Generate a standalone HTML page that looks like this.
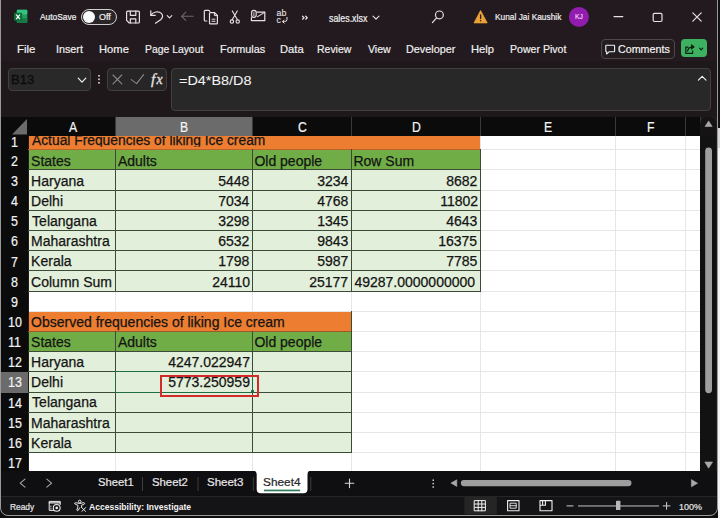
<!DOCTYPE html><html><head><meta charset="utf-8"><style>
*{margin:0;padding:0;box-sizing:border-box}
html,body{width:720px;height:518px;overflow:hidden;background:#0d0d0d}
body{position:relative;font-family:"Liberation Sans",sans-serif}
.a{position:absolute}
.t{position:absolute;white-space:nowrap;line-height:1;transform-origin:0 0}
svg{position:absolute;overflow:visible}
</style></head><body>
<div class="a" style="left:0;top:0;width:718px;height:516px;background:#221a1f;border-radius:0 0 8px 8px"></div>
<svg style="left:0;top:0" width="40" height="40"><rect x="16.8" y="9.8" width="10.5" height="13.3" rx="1" fill="#1e9e5c"/><rect x="16.8" y="9.8" width="10.5" height="4.6" rx="1" fill="#33c27f"/><rect x="16.8" y="18.4" width="10.5" height="4.7" rx="1" fill="#167a45"/><rect x="14" y="12.8" width="8.1" height="8" rx="0.8" fill="#0f6f3c"/><path d="M16.2 14.6 L19.9 19.1 M19.9 14.6 L16.2 19.1" stroke="#f4fff8" stroke-width="1.3"/></svg>
<div class="t" style="left:40.00px;top:13.00px;font-size:9px;color:#f0f0f0;font-weight:400;font-family:'Liberation Sans';transform:scaleX(0.9308);-webkit-text-stroke:0.2px #f0f0f0;">AutoSave</div>
<div class="a" style="left:81px;top:8.5px;width:36px;height:16.5px;border:1.3px solid #cfcfcf;border-radius:9px;background:#2a2627"></div>
<div class="a" style="left:83px;top:10.5px;width:12px;height:12px;border-radius:50%;background:#fafafa"></div>
<div class="t" style="left:99.00px;top:13.40px;font-size:8.5px;color:#f0f0f0;font-weight:400;font-family:'Liberation Sans';transform:scaleX(1.0545);-webkit-text-stroke:0.2px #f0f0f0;">Off</div>
<div class="t" style="left:329.30px;top:13.80px;font-size:10px;color:#f0f0f0;font-weight:400;font-family:'Liberation Sans';transform:scaleX(0.8837);-webkit-text-stroke:0.2px #f0f0f0;">sales.xlsx</div>
<div class="t" style="left:495.42px;top:11.80px;font-size:9.5px;color:#f0f0f0;font-weight:400;font-family:'Liberation Sans';transform:scaleX(0.8784);-webkit-text-stroke:0.2px #f0f0f0;">Kunal Jai Kaushik</div>
<svg style="left:0;top:0" width="720" height="40"><path d="M127.6 11.2 H138.4 Q139.4 11.2 139.4 12.2 V22 Q139.4 23 138.4 23 H129.2 L126.6 20.4 V12.2 Q126.6 11.2 127.6 11.2 Z" stroke="#e6e2e3" stroke-width="1.2" fill="none" stroke-linecap="round" stroke-linejoin="round" /><path d="M130.3 11.2 V15.3 H135.8 V11.2" stroke="#e6e2e3" stroke-width="1.2" fill="none" stroke-linecap="round" stroke-linejoin="round" /><path d="M130.3 23 V18.8 H135.8 V23" stroke="#e6e2e3" stroke-width="1.2" fill="none" stroke-linecap="round" stroke-linejoin="round" /><path d="M150.8 10.8 V15.3 H155.3" stroke="#e6e2e3" stroke-width="1.2" fill="none" stroke-linecap="round" stroke-linejoin="round" /><path d="M150.8 15.3 C153 11.6 158.6 10.8 161.4 13.4 C163.2 15.2 162.8 17.6 161 19.4 L155.4 23.2" stroke="#e6e2e3" stroke-width="1.2" fill="none" stroke-linecap="round" stroke-linejoin="round" /><path d="M167.2 15.6 L169.5 17.8 L171.8 15.6" stroke="#e6e2e3" stroke-width="1.1" fill="none" stroke-linecap="round" stroke-linejoin="round" /><path d="M181.6 16.3 H193.2 M181.6 16.3 L185.8 12.2 M181.6 16.3 L185.8 20.4" stroke="#6e6769" stroke-width="1.1" fill="none" stroke-linecap="round" stroke-linejoin="round" /><path d="M206.8 21 H205.2 Q204.3 21 204.3 20.1 V11.3 Q204.3 10.4 205.2 10.4 H208.6 Q209.6 10.4 209.8 11.6" stroke="#e6e2e3" stroke-width="1.2" fill="none" stroke-linecap="round" stroke-linejoin="round" /><path d="M210.4 12.7 H214.6 L217.4 15.5 V22.9 Q217.4 23.8 216.5 23.8 H210.4 Q209.5 23.8 209.5 22.9 V13.6 Q209.5 12.7 210.4 12.7 Z" stroke="#e6e2e3" stroke-width="1.2" fill="none" stroke-linecap="round" stroke-linejoin="round" /><path d="M214.4 12.8 V15.6 H217.3" stroke="#e6e2e3" stroke-width="1.0" fill="none" stroke-linecap="round" stroke-linejoin="round" /><path d="M212 19.2 H215 M212 21.3 H215" stroke="#e6e2e3" stroke-width="1.0" fill="none" stroke-linecap="round" stroke-linejoin="round" /><path d="M232.3 10.9 L237.3 19.6 M237.3 10.9 L232.3 19.6" stroke="#e6e2e3" stroke-width="1.1" fill="none" stroke-linecap="round" stroke-linejoin="round" /><circle cx="231.9" cy="21.6" r="1.7" stroke="#e6e2e3" stroke-width="1.1" fill="none"/><circle cx="237.7" cy="21.6" r="1.7" stroke="#e6e2e3" stroke-width="1.1" fill="none"/><path d="M256.8 12.2 H264.8 V20.6 H251.4 V17.6" stroke="#e6e2e3" stroke-width="1.2" fill="none" stroke-linecap="round" stroke-linejoin="round" /><path d="M264.6 12.4 L257.6 16.6" stroke="#e6e2e3" stroke-width="1.1" fill="none" stroke-linecap="round" stroke-linejoin="round" /><rect x="251.6" y="10.4" width="4.6" height="7" rx="2.3" stroke="#e6e2e3" stroke-width="1.1" fill="#221a1f"/><path d="M253.9 12.6 V15.6" stroke="#e6e2e3" stroke-width="0.9" fill="none" stroke-linecap="round" stroke-linejoin="round" /><text x="276.6" y="16.1" font-family="Liberation Sans" font-size="8.8" fill="#e6e2e3" stroke="#e6e2e3" stroke-width="0.1">ab</text><text x="276.6" y="22.6" font-family="Liberation Sans" font-size="8.8" fill="#e6e2e3" stroke="#e6e2e3" stroke-width="0.1">c</text><path d="M287 17.4 V19.4 Q287 21.6 284.6 21.6 H282.6 M284.2 20 L282.6 21.6 L284.2 23.2" stroke="#e6e2e3" stroke-width="1.0" fill="none" stroke-linecap="round" stroke-linejoin="round" /><path d="M302.5 16.2 L304.1 17.7 L302.5 19.2 M305.7 16.2 L307.3 17.7 L305.7 19.2" stroke="#e6e2e3" stroke-width="1.2" fill="none" stroke-linecap="round" stroke-linejoin="round" /><path d="M373 16.2 L376 19.2 L379 16.2" stroke="#e6e2e3" stroke-width="1.1" fill="none" stroke-linecap="round" stroke-linejoin="round" /><circle cx="439.4" cy="14.9" r="3.9" stroke="#e6e2e3" stroke-width="1.2" fill="none"/><path d="M436.6 17.8 L432.4 22.6" stroke="#e6e2e3" stroke-width="1.2" fill="none" stroke-linecap="round" stroke-linejoin="round" /><path d="M480.6 10.6 L487.2 22.9 H474 Z" fill="#eaa235" stroke="#eaa235" stroke-width="0.8" stroke-linejoin="round"/><path d="M480.6 14.8 V18.6" stroke="#2a1a10" stroke-width="1.3" fill="none" stroke-linecap="round" stroke-linejoin="round" /><circle cx="480.6" cy="20.7" r="0.7" fill="#2a1a10"/><circle cx="578.9" cy="16.9" r="10" fill="#921cad"/><path d="M614 16.6 H622.8" stroke="#e6e2e3" stroke-width="1.2" fill="none" stroke-linecap="round" stroke-linejoin="round" /><path d="M654.4 13.3 H660.8 Q662 13.3 662 14.5 V20.3 Q662 21.5 660.8 21.5 H654.4 Q653.2 21.5 653.2 20.3 V14.5 Q653.2 13.3 654.4 13.3 Z" stroke="#e6e2e3" stroke-width="1.2" fill="none" stroke-linecap="round" stroke-linejoin="round" /><path d="M692.8 12.8 L701.2 21.2 M701.2 12.8 L692.8 21.2" stroke="#e6e2e3" stroke-width="1.2" fill="none" stroke-linecap="round" stroke-linejoin="round" /></svg>
<div class="t" style="left:574.92px;top:13.30px;font-size:7.7px;color:#f4d0f4;font-weight:400;font-family:'Liberation Sans';transform:scaleX(0.8750);-webkit-text-stroke:0.2px #f4d0f4;">KJ</div>
<div class="t" style="left:17.32px;top:43.00px;font-size:11.6px;color:#f0f0f0;font-weight:400;font-family:'Liberation Sans';transform:scaleX(0.9824);-webkit-text-stroke:0.2px #f0f0f0;">File</div>
<div class="t" style="left:55.77px;top:43.00px;font-size:11.6px;color:#f0f0f0;font-weight:400;font-family:'Liberation Sans';transform:scaleX(0.9286);-webkit-text-stroke:0.2px #f0f0f0;">Insert</div>
<div class="t" style="left:99.03px;top:43.00px;font-size:11.6px;color:#f0f0f0;font-weight:400;font-family:'Liberation Sans';transform:scaleX(0.9667);-webkit-text-stroke:0.2px #f0f0f0;">Home</div>
<div class="t" style="left:145.10px;top:43.00px;font-size:11.6px;color:#f0f0f0;font-weight:400;font-family:'Liberation Sans';transform:scaleX(0.8953);-webkit-text-stroke:0.2px #f0f0f0;">Page Layout</div>
<div class="t" style="left:219.86px;top:43.00px;font-size:11.6px;color:#f0f0f0;font-weight:400;font-family:'Liberation Sans';transform:scaleX(0.9362);-webkit-text-stroke:0.2px #f0f0f0;">Formulas</div>
<div class="t" style="left:279.63px;top:43.00px;font-size:11.6px;color:#f0f0f0;font-weight:400;font-family:'Liberation Sans';transform:scaleX(0.9652);-webkit-text-stroke:0.2px #f0f0f0;">Data</div>
<div class="t" style="left:317.10px;top:43.00px;font-size:11.6px;color:#f0f0f0;font-weight:400;font-family:'Liberation Sans';transform:scaleX(0.9027);-webkit-text-stroke:0.2px #f0f0f0;">Review</div>
<div class="t" style="left:367.50px;top:43.00px;font-size:11.6px;color:#f0f0f0;font-weight:400;font-family:'Liberation Sans';transform:scaleX(0.9120);-webkit-text-stroke:0.2px #f0f0f0;">View</div>
<div class="t" style="left:405.77px;top:43.00px;font-size:11.6px;color:#f0f0f0;font-weight:400;font-family:'Liberation Sans';transform:scaleX(0.9346);-webkit-text-stroke:0.2px #f0f0f0;">Developer</div>
<div class="t" style="left:471.03px;top:43.00px;font-size:11.6px;color:#f0f0f0;font-weight:400;font-family:'Liberation Sans';transform:scaleX(0.9652);-webkit-text-stroke:0.2px #f0f0f0;">Help</div>
<div class="t" style="left:509.89px;top:43.00px;font-size:11.6px;color:#f0f0f0;font-weight:400;font-family:'Liberation Sans';transform:scaleX(0.9115);-webkit-text-stroke:0.2px #f0f0f0;">Power Pivot</div>
<div class="a" style="left:0;top:61px;width:718px;height:56px;background:#1f181b"></div>
<div class="a" style="left:7.5px;top:67.5px;width:83px;height:23px;background:#2a2929;border:1px solid #433f40;border-radius:4px"></div>
<div class="t" style="left:11.19px;top:73.00px;font-size:13px;color:#0c0c0c;font-weight:400;font-family:'Liberation Sans';transform:scaleX(1.0091);-webkit-text-stroke:0.35px #0c0c0c;">B13</div>
<div class="a" style="left:107px;top:67.5px;width:60px;height:23px;background:#272526;border:1px solid #433f40;border-radius:4px"></div>
<div class="a" style="left:170.5px;top:67.5px;width:540px;height:43.5px;background:#292828;border:1px solid #433f40;border-radius:4px"></div>
<div class="t" style="left:179.42px;top:73.50px;font-size:13.3px;color:#f4f4f4;font-weight:400;font-family:'Liberation Sans';transform:scaleX(1.0846);-webkit-text-stroke:0.05px #f4f4f4;">=D4*B8/D8</div>
<div class="a" style="left:28.5px;top:135.5px;width:671.5px;height:335.0px;background:#fff"></div>
<div class="a" style="left:115px;top:135.5px;width:1px;height:335.0px;background:#e6e6e6"></div>
<div class="a" style="left:252px;top:135.5px;width:1px;height:335.0px;background:#e6e6e6"></div>
<div class="a" style="left:351px;top:135.5px;width:1px;height:335.0px;background:#e6e6e6"></div>
<div class="a" style="left:480px;top:135.5px;width:1px;height:335.0px;background:#e6e6e6"></div>
<div class="a" style="left:615px;top:135.5px;width:1px;height:335.0px;background:#e6e6e6"></div>
<div class="a" style="left:685px;top:135.5px;width:1px;height:335.0px;background:#e6e6e6"></div>
<div class="a" style="left:28.5px;top:149px;width:671.5px;height:1px;background:#e6e6e6"></div>
<div class="a" style="left:28.5px;top:169px;width:671.5px;height:1px;background:#e6e6e6"></div>
<div class="a" style="left:28.5px;top:190px;width:671.5px;height:1px;background:#e6e6e6"></div>
<div class="a" style="left:28.5px;top:210px;width:671.5px;height:1px;background:#e6e6e6"></div>
<div class="a" style="left:28.5px;top:230px;width:671.5px;height:1px;background:#e6e6e6"></div>
<div class="a" style="left:28.5px;top:250px;width:671.5px;height:1px;background:#e6e6e6"></div>
<div class="a" style="left:28.5px;top:270px;width:671.5px;height:1px;background:#e6e6e6"></div>
<div class="a" style="left:28.5px;top:291px;width:671.5px;height:1px;background:#e6e6e6"></div>
<div class="a" style="left:28.5px;top:311px;width:671.5px;height:1px;background:#e6e6e6"></div>
<div class="a" style="left:28.5px;top:331px;width:671.5px;height:1px;background:#e6e6e6"></div>
<div class="a" style="left:28.5px;top:351px;width:671.5px;height:1px;background:#e6e6e6"></div>
<div class="a" style="left:28.5px;top:371px;width:671.5px;height:1px;background:#e6e6e6"></div>
<div class="a" style="left:28.5px;top:392px;width:671.5px;height:1px;background:#e6e6e6"></div>
<div class="a" style="left:28.5px;top:412px;width:671.5px;height:1px;background:#e6e6e6"></div>
<div class="a" style="left:28.5px;top:432px;width:671.5px;height:1px;background:#e6e6e6"></div>
<div class="a" style="left:28.5px;top:452px;width:671.5px;height:1px;background:#e6e6e6"></div>
<div class="a" style="left:28.5px;top:473px;width:671.5px;height:1px;background:#e6e6e6"></div>
<div class="a" style="left:28.5px;top:135.5px;width:451.5px;height:14.5px;background:#ed7d31"></div>
<div class="a" style="left:28.5px;top:150px;width:451.5px;height:20px;background:#70ad47"></div>
<div class="a" style="left:28.5px;top:170px;width:451.5px;height:122px;background:#e2efda"></div>
<div class="a" style="left:28px;top:169px;width:453px;height:1px;background:#3c4a38"></div>
<div class="a" style="left:28px;top:190px;width:453px;height:1px;background:#3c4a38"></div>
<div class="a" style="left:28px;top:210px;width:453px;height:1px;background:#3c4a38"></div>
<div class="a" style="left:28px;top:230px;width:453px;height:1px;background:#3c4a38"></div>
<div class="a" style="left:28px;top:250px;width:453px;height:1px;background:#3c4a38"></div>
<div class="a" style="left:28px;top:270px;width:453px;height:1px;background:#3c4a38"></div>
<div class="a" style="left:28px;top:291px;width:453px;height:1px;background:#3c4a38"></div>
<div class="a" style="left:28px;top:149px;width:453px;height:1px;background:#b8642a"></div>
<div class="a" style="left:115px;top:149px;width:1px;height:143px;background:#3c4a38"></div>
<div class="a" style="left:252px;top:149px;width:1px;height:143px;background:#3c4a38"></div>
<div class="a" style="left:351px;top:149px;width:1px;height:143px;background:#3c4a38"></div>
<div class="a" style="left:480px;top:149px;width:1px;height:143px;background:#3c4a38"></div>
<div class="a" style="left:28.5px;top:312px;width:322.5px;height:20px;background:#ed7d31"></div>
<div class="a" style="left:28.5px;top:332px;width:322.5px;height:20px;background:#70ad47"></div>
<div class="a" style="left:28.5px;top:352px;width:322.5px;height:101px;background:#e2efda"></div>
<div class="a" style="left:28px;top:351px;width:324px;height:1px;background:#3c4a38"></div>
<div class="a" style="left:28px;top:371px;width:324px;height:1px;background:#3c4a38"></div>
<div class="a" style="left:28px;top:392px;width:324px;height:1px;background:#3c4a38"></div>
<div class="a" style="left:28px;top:412px;width:324px;height:1px;background:#3c4a38"></div>
<div class="a" style="left:28px;top:432px;width:324px;height:1px;background:#3c4a38"></div>
<div class="a" style="left:28px;top:452px;width:324px;height:1px;background:#3c4a38"></div>
<div class="a" style="left:28px;top:331px;width:324px;height:1px;background:#9a5a2a"></div>
<div class="a" style="left:115px;top:331px;width:1px;height:122px;background:#3c4a38"></div>
<div class="a" style="left:252px;top:331px;width:1px;height:122px;background:#3c4a38"></div>
<div class="a" style="left:351px;top:331px;width:1px;height:122px;background:#3c4a38"></div>
<div class="a" style="left:351px;top:311px;width:1px;height:21px;background:#3c4a38"></div>
<div class="t" style="left:31.60px;top:132.70px;font-size:14px;color:#141414;font-weight:400;font-family:'Liberation Sans';transform:scaleX(0.9864);-webkit-text-stroke:0.25px #141414;clip-path:inset(3.10px 0 0 0);">Actual Frequencies of liking Ice cream</div>
<div class="t" style="left:31.10px;top:153.65px;font-size:14px;color:#141414;font-weight:400;font-family:'Liberation Sans';-webkit-text-stroke:0.25px #141414;">States</div>
<div class="t" style="left:117.90px;top:153.65px;font-size:14px;color:#141414;font-weight:400;font-family:'Liberation Sans';-webkit-text-stroke:0.25px #141414;">Adults</div>
<div class="t" style="left:254.40px;top:153.65px;font-size:14px;color:#141414;font-weight:400;font-family:'Liberation Sans';-webkit-text-stroke:0.25px #141414;">Old people</div>
<div class="t" style="left:353.40px;top:153.65px;font-size:14px;color:#141414;font-weight:400;font-family:'Liberation Sans';-webkit-text-stroke:0.25px #141414;">Row Sum</div>
<div class="t" style="left:31.10px;top:173.80px;font-size:14px;color:#141414;font-weight:400;font-family:'Liberation Sans';-webkit-text-stroke:0.25px #141414;">Haryana</div>
<div class="t" style="left:218.20px;top:173.80px;font-size:14px;color:#141414;font-weight:400;font-family:'Liberation Sans';-webkit-text-stroke:0.25px #141414;">5448</div>
<div class="t" style="left:317.20px;top:173.80px;font-size:14px;color:#141414;font-weight:400;font-family:'Liberation Sans';-webkit-text-stroke:0.25px #141414;">3234</div>
<div class="t" style="left:446.20px;top:173.80px;font-size:14px;color:#141414;font-weight:400;font-family:'Liberation Sans';-webkit-text-stroke:0.25px #141414;">8682</div>
<div class="t" style="left:31.10px;top:193.95px;font-size:14px;color:#141414;font-weight:400;font-family:'Liberation Sans';-webkit-text-stroke:0.25px #141414;">Delhi</div>
<div class="t" style="left:218.20px;top:193.95px;font-size:14px;color:#141414;font-weight:400;font-family:'Liberation Sans';-webkit-text-stroke:0.25px #141414;">7034</div>
<div class="t" style="left:317.20px;top:193.95px;font-size:14px;color:#141414;font-weight:400;font-family:'Liberation Sans';-webkit-text-stroke:0.25px #141414;">4768</div>
<div class="t" style="left:440.20px;top:193.95px;font-size:14px;color:#141414;font-weight:400;font-family:'Liberation Sans';-webkit-text-stroke:0.25px #141414;">11802</div>
<div class="t" style="left:32.10px;top:214.10px;font-size:14px;color:#141414;font-weight:400;font-family:'Liberation Sans';-webkit-text-stroke:0.25px #141414;">Telangana</div>
<div class="t" style="left:218.20px;top:214.10px;font-size:14px;color:#141414;font-weight:400;font-family:'Liberation Sans';-webkit-text-stroke:0.25px #141414;">3298</div>
<div class="t" style="left:317.20px;top:214.10px;font-size:14px;color:#141414;font-weight:400;font-family:'Liberation Sans';-webkit-text-stroke:0.25px #141414;">1345</div>
<div class="t" style="left:446.20px;top:214.10px;font-size:14px;color:#141414;font-weight:400;font-family:'Liberation Sans';-webkit-text-stroke:0.25px #141414;">4643</div>
<div class="t" style="left:31.10px;top:234.25px;font-size:14px;color:#141414;font-weight:400;font-family:'Liberation Sans';-webkit-text-stroke:0.25px #141414;">Maharashtra</div>
<div class="t" style="left:218.20px;top:234.25px;font-size:14px;color:#141414;font-weight:400;font-family:'Liberation Sans';-webkit-text-stroke:0.25px #141414;">6532</div>
<div class="t" style="left:317.20px;top:234.25px;font-size:14px;color:#141414;font-weight:400;font-family:'Liberation Sans';-webkit-text-stroke:0.25px #141414;">9843</div>
<div class="t" style="left:438.20px;top:234.25px;font-size:14px;color:#141414;font-weight:400;font-family:'Liberation Sans';-webkit-text-stroke:0.25px #141414;">16375</div>
<div class="t" style="left:31.10px;top:254.40px;font-size:14px;color:#141414;font-weight:400;font-family:'Liberation Sans';-webkit-text-stroke:0.25px #141414;">Kerala</div>
<div class="t" style="left:218.20px;top:254.40px;font-size:14px;color:#141414;font-weight:400;font-family:'Liberation Sans';-webkit-text-stroke:0.25px #141414;">1798</div>
<div class="t" style="left:317.20px;top:254.40px;font-size:14px;color:#141414;font-weight:400;font-family:'Liberation Sans';-webkit-text-stroke:0.25px #141414;">5987</div>
<div class="t" style="left:446.20px;top:254.40px;font-size:14px;color:#141414;font-weight:400;font-family:'Liberation Sans';-webkit-text-stroke:0.25px #141414;">7785</div>
<div class="t" style="left:31.10px;top:274.55px;font-size:14px;color:#141414;font-weight:400;font-family:'Liberation Sans';-webkit-text-stroke:0.25px #141414;">Column Sum</div>
<div class="t" style="left:212.20px;top:274.55px;font-size:14px;color:#141414;font-weight:400;font-family:'Liberation Sans';-webkit-text-stroke:0.25px #141414;">24110</div>
<div class="t" style="left:309.20px;top:274.55px;font-size:14px;color:#141414;font-weight:400;font-family:'Liberation Sans';-webkit-text-stroke:0.25px #141414;">25177</div>
<div class="t" style="left:354.40px;top:274.55px;font-size:14px;color:#141414;font-weight:400;font-family:'Liberation Sans';-webkit-text-stroke:0.25px #141414;">49287.0000000000</div>
<div class="t" style="left:31.10px;top:314.85px;font-size:14px;color:#141414;font-weight:400;font-family:'Liberation Sans';-webkit-text-stroke:0.25px #141414;">Observed frequencies of liking Ice cream</div>
<div class="t" style="left:31.10px;top:335.00px;font-size:14px;color:#141414;font-weight:400;font-family:'Liberation Sans';-webkit-text-stroke:0.25px #141414;">States</div>
<div class="t" style="left:117.90px;top:335.00px;font-size:14px;color:#141414;font-weight:400;font-family:'Liberation Sans';-webkit-text-stroke:0.25px #141414;">Adults</div>
<div class="t" style="left:254.40px;top:335.00px;font-size:14px;color:#141414;font-weight:400;font-family:'Liberation Sans';-webkit-text-stroke:0.25px #141414;">Old people</div>
<div class="t" style="left:31.10px;top:355.15px;font-size:14px;color:#141414;font-weight:400;font-family:'Liberation Sans';-webkit-text-stroke:0.25px #141414;">Haryana</div>
<div class="t" style="left:31.10px;top:375.30px;font-size:14px;color:#141414;font-weight:400;font-family:'Liberation Sans';-webkit-text-stroke:0.25px #141414;">Delhi</div>
<div class="t" style="left:32.10px;top:395.45px;font-size:14px;color:#141414;font-weight:400;font-family:'Liberation Sans';-webkit-text-stroke:0.25px #141414;">Telangana</div>
<div class="t" style="left:31.10px;top:415.60px;font-size:14px;color:#141414;font-weight:400;font-family:'Liberation Sans';-webkit-text-stroke:0.25px #141414;">Maharashtra</div>
<div class="t" style="left:31.10px;top:435.75px;font-size:14px;color:#141414;font-weight:400;font-family:'Liberation Sans';-webkit-text-stroke:0.25px #141414;">Kerala</div>
<div class="t" style="left:168.20px;top:355.15px;font-size:14px;color:#141414;font-weight:400;font-family:'Liberation Sans';-webkit-text-stroke:0.25px #141414;">4247.022947</div>
<div class="t" style="left:168.20px;top:375.30px;font-size:14px;color:#141414;font-weight:400;font-family:'Liberation Sans';-webkit-text-stroke:0.25px #141414;">5773.250959</div>
<div class="a" style="left:115px;top:371px;width:138px;height:22px;border:1px solid #1f6b42"></div>
<div class="a" style="left:250.5px;top:390px;width:3.4px;height:3.4px;background:#1f6b42;border-radius:0.5px"></div>
<div class="a" style="left:160px;top:375.3px;width:98.7px;height:21.4px;border:2px solid #d32a2a"></div>
<div class="a" style="left:1px;top:117px;width:699px;height:18.5px;background:#0b0b0b"></div>
<div class="a" style="left:29px;top:117px;width:87px;height:18.5px;background:#0b0b0b;border-right:1px solid #3a3a3a"></div>
<div class="t" style="left:68.53px;top:120.20px;font-size:14.2px;color:#f4f4f4;font-weight:400;font-family:'Liberation Sans';transform:scaleX(0.8600);-webkit-text-stroke:0.2px #f4f4f4;">A</div>
<div class="a" style="left:116px;top:117px;width:137px;height:18.5px;background:#6b6b6b;border-right:1px solid #3a3a3a"></div>
<div class="t" style="left:180.10px;top:120.20px;font-size:14.2px;color:#f4f4f4;font-weight:400;font-family:'Liberation Sans';transform:scaleX(0.8600);-webkit-text-stroke:0.2px #f4f4f4;">B</div>
<div class="a" style="left:253px;top:117px;width:99px;height:18.5px;background:#0b0b0b;border-right:1px solid #3a3a3a"></div>
<div class="t" style="left:297.67px;top:120.20px;font-size:14.2px;color:#f4f4f4;font-weight:400;font-family:'Liberation Sans';transform:scaleX(0.8600);-webkit-text-stroke:0.2px #f4f4f4;">C</div>
<div class="a" style="left:352px;top:117px;width:129px;height:18.5px;background:#0b0b0b;border-right:1px solid #3a3a3a"></div>
<div class="t" style="left:411.67px;top:120.20px;font-size:14.2px;color:#f4f4f4;font-weight:400;font-family:'Liberation Sans';transform:scaleX(0.8600);-webkit-text-stroke:0.2px #f4f4f4;">D</div>
<div class="a" style="left:481px;top:117px;width:135px;height:18.5px;background:#0b0b0b;border-right:1px solid #3a3a3a"></div>
<div class="t" style="left:544.10px;top:120.20px;font-size:14.2px;color:#f4f4f4;font-weight:400;font-family:'Liberation Sans';transform:scaleX(0.8600);-webkit-text-stroke:0.2px #f4f4f4;">E</div>
<div class="a" style="left:616px;top:117px;width:70px;height:18.5px;background:#0b0b0b;border-right:1px solid #3a3a3a"></div>
<div class="t" style="left:647.03px;top:120.20px;font-size:14.2px;color:#f4f4f4;font-weight:400;font-family:'Liberation Sans';transform:scaleX(0.8600);-webkit-text-stroke:0.2px #f4f4f4;">F</div>
<div class="a" style="left:686px;top:117px;width:15px;height:18.5px;background:#0b0b0b;border-right:1px solid #3a3a3a"></div>
<svg style="left:0;top:0" width="720" height="518"><polygon points="27,119 27,134.5 12,134.5" fill="#6b6b6b"/></svg>
<div class="a" style="left:1px;top:135.5px;width:27px;height:335px;background:#0b0b0b"></div>
<div class="a" style="left:1px;top:135.5px;width:27px;height:15.5px;background:#0b0b0b;border-bottom:1px solid #333"></div>
<div class="t" style="left:11.48px;top:134.60px;font-size:14.2px;color:#f2f2f2;font-weight:400;font-family:'Liberation Sans';transform:scaleX(0.8800);-webkit-text-stroke:0.2px #f2f2f2;">1</div>
<div class="a" style="left:1px;top:150px;width:27px;height:21px;background:#0b0b0b;border-bottom:1px solid #333"></div>
<div class="t" style="left:11.48px;top:153.75px;font-size:14.2px;color:#f2f2f2;font-weight:400;font-family:'Liberation Sans';transform:scaleX(0.8800);-webkit-text-stroke:0.2px #f2f2f2;">2</div>
<div class="a" style="left:1px;top:170px;width:27px;height:22px;background:#0b0b0b;border-bottom:1px solid #333"></div>
<div class="t" style="left:11.48px;top:173.90px;font-size:14.2px;color:#f2f2f2;font-weight:400;font-family:'Liberation Sans';transform:scaleX(0.8800);-webkit-text-stroke:0.2px #f2f2f2;">3</div>
<div class="a" style="left:1px;top:191px;width:27px;height:21px;background:#0b0b0b;border-bottom:1px solid #333"></div>
<div class="t" style="left:11.48px;top:194.05px;font-size:14.2px;color:#f2f2f2;font-weight:400;font-family:'Liberation Sans';transform:scaleX(0.8800);-webkit-text-stroke:0.2px #f2f2f2;">4</div>
<div class="a" style="left:1px;top:211px;width:27px;height:21px;background:#0b0b0b;border-bottom:1px solid #333"></div>
<div class="t" style="left:11.48px;top:214.20px;font-size:14.2px;color:#f2f2f2;font-weight:400;font-family:'Liberation Sans';transform:scaleX(0.8800);-webkit-text-stroke:0.2px #f2f2f2;">5</div>
<div class="a" style="left:1px;top:231px;width:27px;height:21px;background:#0b0b0b;border-bottom:1px solid #333"></div>
<div class="t" style="left:11.48px;top:234.35px;font-size:14.2px;color:#f2f2f2;font-weight:400;font-family:'Liberation Sans';transform:scaleX(0.8800);-webkit-text-stroke:0.2px #f2f2f2;">6</div>
<div class="a" style="left:1px;top:251px;width:27px;height:21px;background:#0b0b0b;border-bottom:1px solid #333"></div>
<div class="t" style="left:11.48px;top:254.50px;font-size:14.2px;color:#f2f2f2;font-weight:400;font-family:'Liberation Sans';transform:scaleX(0.8800);-webkit-text-stroke:0.2px #f2f2f2;">7</div>
<div class="a" style="left:1px;top:271px;width:27px;height:22px;background:#0b0b0b;border-bottom:1px solid #333"></div>
<div class="t" style="left:11.48px;top:274.65px;font-size:14.2px;color:#f2f2f2;font-weight:400;font-family:'Liberation Sans';transform:scaleX(0.8800);-webkit-text-stroke:0.2px #f2f2f2;">8</div>
<div class="a" style="left:1px;top:292px;width:27px;height:21px;background:#0b0b0b;border-bottom:1px solid #333"></div>
<div class="t" style="left:11.48px;top:294.80px;font-size:14.2px;color:#f2f2f2;font-weight:400;font-family:'Liberation Sans';transform:scaleX(0.8800);-webkit-text-stroke:0.2px #f2f2f2;">9</div>
<div class="a" style="left:1px;top:312px;width:27px;height:21px;background:#0b0b0b;border-bottom:1px solid #333"></div>
<div class="t" style="left:7.52px;top:314.95px;font-size:14.2px;color:#f2f2f2;font-weight:400;font-family:'Liberation Sans';transform:scaleX(0.8800);-webkit-text-stroke:0.2px #f2f2f2;">10</div>
<div class="a" style="left:1px;top:332px;width:27px;height:21px;background:#0b0b0b;border-bottom:1px solid #333"></div>
<div class="t" style="left:8.40px;top:335.10px;font-size:14.2px;color:#f2f2f2;font-weight:400;font-family:'Liberation Sans';transform:scaleX(0.8800);-webkit-text-stroke:0.2px #f2f2f2;">11</div>
<div class="a" style="left:1px;top:352px;width:27px;height:21px;background:#0b0b0b;border-bottom:1px solid #333"></div>
<div class="t" style="left:7.96px;top:355.25px;font-size:14.2px;color:#f2f2f2;font-weight:400;font-family:'Liberation Sans';transform:scaleX(0.8800);-webkit-text-stroke:0.2px #f2f2f2;">12</div>
<div class="a" style="left:1px;top:372px;width:27px;height:22px;background:#6b6b6b;border-bottom:1px solid #333"></div>
<div class="t" style="left:7.96px;top:375.40px;font-size:14.2px;color:#f2f2f2;font-weight:400;font-family:'Liberation Sans';transform:scaleX(0.8800);-webkit-text-stroke:0.2px #f2f2f2;">13</div>
<div class="a" style="left:1px;top:393px;width:27px;height:21px;background:#0b0b0b;border-bottom:1px solid #333"></div>
<div class="t" style="left:7.52px;top:395.55px;font-size:14.2px;color:#f2f2f2;font-weight:400;font-family:'Liberation Sans';transform:scaleX(0.8800);-webkit-text-stroke:0.2px #f2f2f2;">14</div>
<div class="a" style="left:1px;top:413px;width:27px;height:21px;background:#0b0b0b;border-bottom:1px solid #333"></div>
<div class="t" style="left:7.96px;top:415.70px;font-size:14.2px;color:#f2f2f2;font-weight:400;font-family:'Liberation Sans';transform:scaleX(0.8800);-webkit-text-stroke:0.2px #f2f2f2;">15</div>
<div class="a" style="left:1px;top:433px;width:27px;height:21px;background:#0b0b0b;border-bottom:1px solid #333"></div>
<div class="t" style="left:7.96px;top:435.85px;font-size:14.2px;color:#f2f2f2;font-weight:400;font-family:'Liberation Sans';transform:scaleX(0.8800);-webkit-text-stroke:0.2px #f2f2f2;">16</div>
<div class="a" style="left:1px;top:453px;width:27px;height:22px;background:#0b0b0b;border-bottom:1px solid #333"></div>
<div class="t" style="left:7.96px;top:456.00px;font-size:14.2px;color:#f2f2f2;font-weight:400;font-family:'Liberation Sans';transform:scaleX(0.8800);-webkit-text-stroke:0.2px #f2f2f2;">17</div>
<div class="a" style="left:601.3px;top:38.7px;width:73.4px;height:20px;border:1px solid #4d4749;border-radius:4px;background:#241d20"></div>
<div class="t" style="left:618.04px;top:43.90px;font-size:11.2px;color:#f4f4f4;font-weight:400;font-family:'Liberation Sans';transform:scaleX(0.9566);-webkit-text-stroke:0.2px #f4f4f4;">Comments</div>
<div class="a" style="left:681.3px;top:39px;width:25.5px;height:18.3px;border-radius:4px;background:#3eb161"></div>
<svg style="left:0;top:0" width="720" height="120"><path d="M78.2 78.2 L82 82.2 L85.8 78.2" stroke="#f0f0f0" stroke-width="1.2" fill="none" stroke-linecap="round" stroke-linejoin="round" /><rect x="98.2" y="75.0" width="1.6" height="1.6" fill="#e4dcde"/><rect x="98.2" y="78.5" width="1.6" height="1.6" fill="#e4dcde"/><rect x="98.2" y="82.0" width="1.6" height="1.6" fill="#e4dcde"/><path d="M113 75 L121.8 83.9 M121.8 75 L113 83.9" stroke="#8a8788" stroke-width="1.1" fill="none" stroke-linecap="round" stroke-linejoin="round" /><path d="M131.2 79.6 L136.6 83.6 L143.6 74.6" stroke="#8a8788" stroke-width="1.1" fill="none" stroke-linecap="round" stroke-linejoin="round" /><text x="151" y="84" font-family="Liberation Serif" font-style="italic" font-size="15.5" fill="#e6e2e3" stroke="#e6e2e3" stroke-width="0.3">f<tspan dx="1.2" font-size="13.8">x</tspan></text><path d="M698.4 80.2 L702.2 76.4 L706 80.2" stroke="#f0f0f0" stroke-width="1.2" fill="none" stroke-linecap="round" stroke-linejoin="round" /><path d="M606.4 45.2 H614 Q614.6 45.2 614.6 45.8 V51.2 Q614.6 51.8 614 51.8 H609 L606.6 54 V51.8 Q605.8 51.8 605.8 51.2 V45.8 Q605.8 45.2 606.4 45.2 Z" stroke="#f0f0f0" stroke-width="1.1" fill="none" stroke-linecap="round" stroke-linejoin="round" /><path d="M688 47.2 H685.8 V53.4 H692.6 V50.8" stroke="#0b1f10" stroke-width="1.2" fill="none" stroke-linecap="round" stroke-linejoin="round" /><path d="M687.6 51.2 Q688.2 47 692.8 46.8" stroke="#0b1f10" stroke-width="1.2" fill="none" stroke-linecap="round" stroke-linejoin="round" /><path d="M691.4 44.6 L694.4 46.9 L691.4 49.2 Z" fill="#0b1f10" stroke="#0b1f10" stroke-width="0.8" stroke-linejoin="round"/><path d="M699.6 48.2 L701.2 49.8 L702.8 48.2" stroke="#0b1f10" stroke-width="1.2" fill="none" stroke-linecap="round" stroke-linejoin="round" /></svg>
<div class="a" style="left:700px;top:116.5px;width:16px;height:354px;background:#151314;border-radius:7px 7px 0 0"></div>
<div class="a" style="left:700px;top:135.5px;width:16px;height:335px;background:#121212"></div>
<svg style="left:0;top:0" width="720" height="518"><path d="M708.6 120.9 L712.2 126.5 H705 Z" fill="#a8a8a8" stroke="#a8a8a8" stroke-width="0.6" stroke-linejoin="round"/><rect x="705.2" y="147.6" width="6.8" height="245.6" rx="3.4" fill="#9e9e9e"/><path d="M708.6 468.2 L712.6 462 H704.8 Z" fill="#a8a8a8" stroke="#a8a8a8" stroke-width="0.6" stroke-linejoin="round"/></svg>
<div class="a" style="left:1px;top:470.5px;width:715.5px;height:25.3px;background:#0f0e10"></div>
<div class="a" style="left:1px;top:495.8px;width:715.5px;height:1px;background:#262526"></div>
<div class="a" style="left:1px;top:496.8px;width:715.5px;height:18px;background:#141315;border-radius:0 0 7px 7px"></div>
<svg style="left:0;top:0" width="720" height="518"><path d="M25 479.2 L20.2 483.2 L25 487.2" stroke="#a6a6a6" stroke-width="1.1" fill="none" stroke-linecap="round" stroke-linejoin="round" /><path d="M46.8 479.2 L51.6 483.2 L46.8 487.2" stroke="#a6a6a6" stroke-width="1.1" fill="none" stroke-linecap="round" stroke-linejoin="round" /><path d="M252.7 470.5 Q256.7 470.5 256.7 474.5 V489.3 Q256.7 493.3 260.7 493.3 H303.5 Q307.5 493.3 307.5 489.3 V474.5 Q307.5 470.5 311.5 470.5 Z" fill="#ffffff"/><rect x="264" y="489.6" width="36.2" height="1.7" fill="#2f7d59"/><rect x="142.0" y="477" width="1" height="14" fill="#3e3d3f"/><rect x="197.5" y="477" width="1" height="14" fill="#3e3d3f"/><rect x="252.8" y="477" width="1" height="14" fill="#3e3d3f"/><rect x="310.3" y="477" width="1" height="14" fill="#3e3d3f"/><path d="M349.5 479 V487.6 M345.2 483.3 H353.8" stroke="#d8d8d8" stroke-width="1.1" fill="none" stroke-linecap="round" stroke-linejoin="round" /><rect x="432.5" y="479.45" width="1.5" height="1.5" fill="#d0d0d0"/><rect x="432.5" y="482.85" width="1.5" height="1.5" fill="#d0d0d0"/><rect x="432.5" y="486.25" width="1.5" height="1.5" fill="#d0d0d0"/><path d="M450.9 483.1 L456.8 479.8 V486.4 Z" fill="#a8a8a8" stroke="#a8a8a8" stroke-width="0.6" stroke-linejoin="round"/><rect x="460.8" y="480" width="170.7" height="6.2" rx="3.1" fill="#9e9e9e"/><path d="M697.6 483.2 L691.4 479.6 V486.8 Z" fill="#a8a8a8" stroke="#a8a8a8" stroke-width="0.6" stroke-linejoin="round"/><rect x="464.4" y="496.8" width="32.4" height="17.6" fill="#262526"/><path d="M474.6 500.6 H485.4 V510.8 H474.6 Z M478.2 500.6 V510.8 M481.8 500.6 V510.8 M474.6 504 H485.4 M474.6 507.4 H485.4" stroke="#f0f0f0" stroke-width="1.0" fill="none" stroke-linecap="round" stroke-linejoin="round" /><path d="M507.6 500.6 H519 V510.8 H507.6 Z" stroke="#f0f0f0" stroke-width="1.1" fill="none" stroke-linecap="round" stroke-linejoin="round" /><path d="M510.4 503.2 H516.2 V508.2 H510.4 Z M510.4 505.7 H516.2" stroke="#f0f0f0" stroke-width="0.9" fill="none" stroke-linecap="round" stroke-linejoin="round" /><path d="M540 500.6 H552 V510.8 H540 Z M540 505.2 H545.4 V500.6 M542.6 500.6 V505.2" stroke="#f0f0f0" stroke-width="1.1" fill="none" stroke-linecap="round" stroke-linejoin="round" /><path d="M567 505.9 H573" stroke="#d0d0d0" stroke-width="1.0" fill="none" stroke-linecap="round" stroke-linejoin="round" /><rect x="578" y="505.3" width="81" height="1.3" fill="#9a9a9a"/><rect x="616" y="500.7" width="4.4" height="9.4" rx="0.6" fill="#b8b8b8"/><path d="M663.2 505.9 H670 M666.6 502.5 V509.3" stroke="#d0d0d0" stroke-width="1.0" fill="none" stroke-linecap="round" stroke-linejoin="round" /><path d="M54 510.4 H49.2 V501.4 H60.2 V504.6" stroke="#ececec" stroke-width="1.0" fill="none" stroke-linecap="round" stroke-linejoin="round" /><path d="M49.2 502.8 H60.2" stroke="#ececec" stroke-width="1.2" fill="none" stroke-linecap="round" stroke-linejoin="round" /><path d="M50.9 506 V506.8 M50.9 508.2 V509" stroke="#ececec" stroke-width="0.9" fill="none" stroke-linecap="round" stroke-linejoin="round" /><circle cx="56.7" cy="507.9" r="3.4" fill="#141315" stroke="#ececec" stroke-width="1.1"/><circle cx="56.7" cy="507.9" r="1.3" fill="#ececec"/><circle cx="79.7" cy="501.5" r="1.3" fill="none" stroke="#ececec" stroke-width="1"/><path d="M74.8 503.2 Q75.4 502.4 76.4 502.8 Q79.7 504.2 83 502.8 Q84 502.4 84.6 503.2 Q84.8 504 83.8 504.4 L81.6 505.2 V507.4" stroke="#ececec" stroke-width="1.0" fill="none" stroke-linecap="round" stroke-linejoin="round" /><path d="M74.8 503.2 Q74.6 504 75.6 504.4 L77.8 505.2 V507.2 L76.8 510.2 Q77.4 511 78.2 510.4 L79.7 507.8" stroke="#ececec" stroke-width="1.0" fill="none" stroke-linecap="round" stroke-linejoin="round" /><path d="M81.8 507.6 L85.6 511.4 M85.6 507.6 L81.8 511.4" stroke="#ececec" stroke-width="1.0" fill="none" stroke-linecap="round" stroke-linejoin="round" /></svg>
<div class="t" style="left:97.77px;top:476.50px;font-size:11.5px;color:#e8e8e8;font-weight:400;font-family:'Liberation Sans';transform:scaleX(0.9786);-webkit-text-stroke:0.2px #e8e8e8;">Sheet1</div>
<div class="t" style="left:152.01px;top:476.50px;font-size:11.5px;color:#e8e8e8;font-weight:400;font-family:'Liberation Sans';transform:scaleX(0.9857);-webkit-text-stroke:0.2px #e8e8e8;">Sheet2</div>
<div class="t" style="left:207.00px;top:476.50px;font-size:11.5px;color:#e8e8e8;font-weight:400;font-family:'Liberation Sans';-webkit-text-stroke:0.2px #e8e8e8;">Sheet3</div>
<div class="t" style="left:262.97px;top:476.50px;font-size:11.5px;color:#262626;font-weight:400;font-family:'Liberation Sans';transform:scaleX(1.0286);-webkit-text-stroke:0.2px #262626;">Sheet4</div>
<div class="t" style="left:9.84px;top:502.80px;font-size:8.7px;color:#e4e4e4;font-weight:400;font-family:'Liberation Sans';transform:scaleX(0.9625);-webkit-text-stroke:0.2px #e4e4e4;">Ready</div>
<div class="t" style="left:89.40px;top:502.80px;font-size:8.7px;color:#f4f4f4;font-weight:700;font-family:'Liberation Sans';transform:scaleX(0.9837);">Accessibility: Investigate</div>
<div class="t" style="left:678.97px;top:502.60px;font-size:8.7px;color:#e4e4e4;font-weight:400;font-family:'Liberation Sans';transform:scaleX(1.0333);-webkit-text-stroke:0.2px #e4e4e4;">100%</div>
<div class="a" style="left:0;top:-10px;width:718px;height:526px;border:1px solid #9a9899;border-radius:8px;pointer-events:none"></div>
<div class="a" style="left:718px;top:0;width:2px;height:518px;background:#101010"></div>
<div class="a" style="left:718px;top:128px;width:2px;height:20px;background:#d8d8d8"></div>
<div class="a" style="left:718px;top:148px;width:2px;height:370px;background:#f4f4f4"></div>
</body></html>
